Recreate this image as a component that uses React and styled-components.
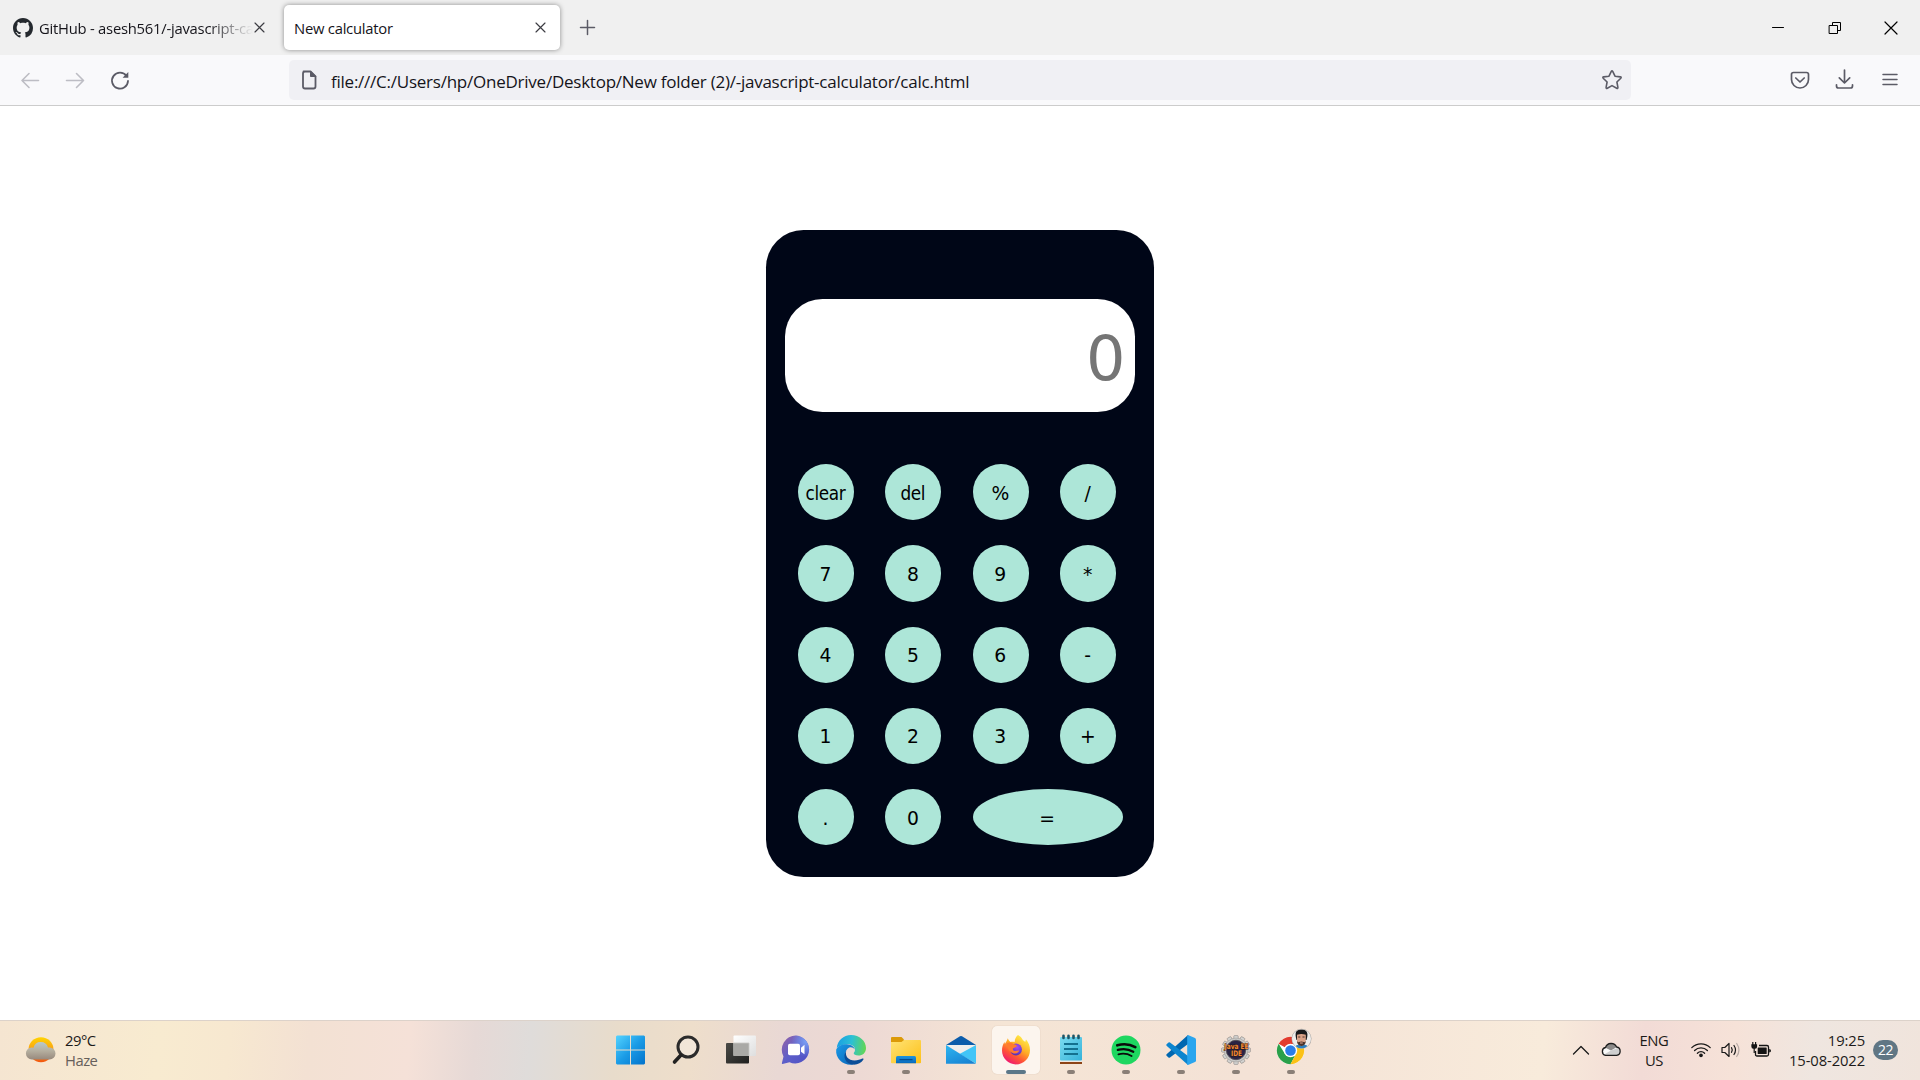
import React from "react";
import styled, { createGlobalStyle } from "styled-components";

const Global = createGlobalStyle`
  * { box-sizing: border-box; }
  body { margin: 0; background: #fff; overflow: hidden; }
`;

const Screen = styled.div`
  width: 1920px;
  height: 1080px;
  display: flex;
  flex-direction: column;
  background: #fff;
  font-family: "Open Sans", "Noto Sans", sans-serif;
  color: #15141a;
`;

/* ---------- browser chrome ---------- */

const TabStrip = styled.header`
  height: 55px;
  flex: none;
  display: flex;
  align-items: center;
  padding: 0 18px 0 5px;
  background: #f0f0f0;
`;

const Tab = styled.div`
  width: 276px;
  height: 45px;
  margin-right: ${(p) => (p.$active ? "0" : "3px")};
  padding: 0 ${(p) => (p.$active ? "15px" : "17px")} 0 ${(p) => (p.$active ? "10px" : "8px")};
  display: flex;
  align-items: center;
  border-radius: 5px;
  background: ${(p) => (p.$active ? "#fff" : "transparent")};
  box-shadow: ${(p) => (p.$active ? "0 0 5px rgba(0, 0, 0, 0.42)" : "none")};
`;

const TabTitle = styled.span`
  flex: 1;
  min-width: 0;
  margin-left: ${(p) => (p.$fade ? "6px" : "0")};
  margin-right: ${(p) => (p.$fade ? "2px" : "0")};
  white-space: nowrap;
  font-size: 14.8px;
  line-height: 24px;
  letter-spacing: -0.24px;
  mask-image: ${(p) => (p.$fade ? "linear-gradient(to left, transparent 0, #000 46px)" : "none")};
`;

const NewTab = styled.div`
  margin-left: 20px;
  display: flex;
`;

const WindowButtons = styled.div`
  margin-left: auto;
  display: flex;
  gap: 39px;
  align-items: center;
`;

const Icon = styled.svg`
  display: block;
  flex: none;
  overflow: visible;
  fill: none;
  stroke: ${(p) => p.$color || "#5b5b66"};
  stroke-width: ${(p) => p.$weight || 1.6};
  stroke-linecap: round;
  stroke-linejoin: round;
`;

const Toolbar = styled.nav`
  height: 51px;
  flex: none;
  display: flex;
  align-items: center;
  padding: 0 20px;
  background: #f9f9fb;
  border-bottom: 1px solid #ccc;
`;

const NavButtons = styled.div`
  width: 269px;
  display: flex;
  gap: 25px;
`;

const UrlField = styled.div`
  width: 1342px;
  height: 40px;
  display: flex;
  align-items: center;
  padding: 0 9px 0 11px;
  border-radius: 5px;
  background: #f0f0f4;
`;

const UrlText = styled.span`
  flex: 1;
  margin-left: 13px;
  padding-top: 3px;
  font-size: 17px;
  line-height: 24px;
  white-space: nowrap;
  letter-spacing: -0.24px;
`;

const ToolbarActions = styled.div`
  margin-left: auto;
  display: flex;
  gap: 25px;
`;

/* ---------- calculator ---------- */

const Page = styled.main`
  flex: 1;
  display: flex;
  justify-content: center;
  align-items: flex-start;
  padding-top: 124px;
`;

const Calculator = styled.section`
  width: 388px;
  height: 647px;
  padding: 69px 19px 0;
  border-radius: 37.5px;
  background: #000617;
  font-family: "DejaVu Sans", sans-serif;
`;

const Display = styled.div`
  height: 113px;
  display: flex;
  align-items: center;
  justify-content: flex-end;
  padding: 7px 10px 0 0;
  border-radius: 37.5px;
  background: #fff;
  color: #757575;
  font-size: 62px;
  letter-spacing: -0.5px;
  line-height: 1;
`;

const Keys = styled.div`
  margin: 52px 0 0 12.8px;
  display: grid;
  grid-template-columns: repeat(4, 56.25px);
  grid-auto-rows: 56.25px;
  column-gap: 31.2px;
  row-gap: 25px;
`;

const Key = styled.button`
  width: ${(p) => (p.$wide ? "150px" : "56.25px")};
  height: 56.25px;
  padding: 2px 1px 0 0;
  border: 0;
  border-radius: 50%;
  background: #ade6d8;
  color: #000;
  font-family: ${(p) => (p.$word ? '"DejaVu Sans Condensed", ' : "")}"DejaVu Sans", sans-serif;
  font-stretch: ${(p) => (p.$word ? "condensed" : "normal")};
  font-size: 18.75px;
  letter-spacing: ${(p) => (p.$word ? "-0.4px" : "0")};
`;

/* ---------- taskbar ---------- */

const Taskbar = styled.footer`
  height: 60px;
  flex: none;
  display: grid;
  grid-template-columns: 607px 708px 1fr;
  border-top: 1px solid #dcd2ca;
  background: linear-gradient(
    95deg,
    #f5e5d1 0, #f8ebd0 160px, #f7e8d0 230px, #f3e1d3 310px, #f5e1d8 410px,
    #e6d9d6 475px, #dfdcda 530px, #e8dccb 615px, #eedecb 690px, #e9d8d4 780px,
    #edd9d4 860px, #f5e5d5 1000px, #f4e2d6 1250px, #f8ebdb 1540px,
    #f2dbd6 1640px, #f6e2d8 1730px, #efe6e0 1810px, #f0e4dc 1920px
  );
`;

const Weather = styled.div`
  display: flex;
  align-items: center;
  gap: 9px;
  padding: 0 0 0 26px;
`;

const Lines = styled.div`
  display: flex;
  flex-direction: column;
  width: ${(p) => p.$width || "auto"};
  padding-bottom: 2px;
  text-align: ${(p) => p.$align || "left"};
  font-size: 14.8px;
  line-height: 20px;
  letter-spacing: ${(p) => p.$spacing || "-0.3px"};
  color: #1c1a19;
  white-space: nowrap;
`;

const Muted = styled.span`
  color: #66605b;
`;

const Apps = styled.div`
  display: flex;
  gap: 7px;
  padding-top: 5px;
`;

const App48 = styled.div`
  width: 48px;
  height: 48px;
  flex: none;
  display: flex;
  flex-direction: column;
  align-items: center;
  padding-top: 9px;
  border-radius: 5px;
  background: ${(p) => (p.$active ? "rgba(255, 252, 248, 0.7)" : "transparent")};
  box-shadow: ${(p) => (p.$active ? "0 0 1px rgba(120, 90, 70, 0.35)" : "none")};
`;

const Running = styled.i`
  width: ${(p) => (p.$active ? "20px" : "8px")};
  height: 4px;
  margin-top: 5px;
  border-radius: 2px;
  background: ${(p) => (p.$active ? "#5b7788" : "#8a7f77")};
`;

const Glyph = styled.svg`
  display: block;
  flex: none;
  overflow: visible;
`;

const Tray = styled.div`
  display: flex;
  align-items: center;
  justify-content: flex-end;
  padding-right: 22px;
`;

const Slot = styled.div`
  display: flex;
  justify-content: center;
  width: ${(p) => p.$width};
  margin-left: ${(p) => p.$before || "0"};
  margin-right: ${(p) => p.$after || "0"};
`;

const Badge = styled.div`
  width: 25px;
  height: 20px;
  margin: 0 0 1px 8px;
  border-radius: 10px;
  background: #607684;
  color: #fff;
  font-size: 14px;
  line-height: 20px;
  letter-spacing: -0.4px;
  text-align: center;
`;

/* ---------- drawings ---------- */

const Cross = ({ size = 9, color = "#3c3c42", weight = 1.3 }) => (
  <Icon width={size} height={size} viewBox="0 0 10 10" $color={color} $weight={weight}>
    <path d="M0 0L10 10M10 0L0 10" />
  </Icon>
);

const Github = () => (
  <Glyph width="20" height="20" viewBox="0 0 16 16">
    <path
      fill="#24292e"
      d="M8 0C3.58 0 0 3.58 0 8c0 3.54 2.29 6.53 5.47 7.59.4.07.55-.17.55-.38 0-.19-.01-.82-.01-1.49-2.01.37-2.53-.49-2.69-.94-.09-.23-.48-.94-.82-1.13-.28-.15-.68-.52-.01-.53.63-.01 1.08.58 1.23.82.72 1.21 1.87.87 2.33.66.07-.52.28-.87.51-1.07-1.78-.2-3.64-.89-3.64-3.95 0-.87.31-1.59.82-2.15-.08-.2-.36-1.02.08-2.12 0 0 .67-.21 2.2.82.64-.18 1.32-.27 2-.27s1.36.09 2 .27c1.53-1.04 2.2-.82 2.2-.82.44 1.1.16 1.92.08 2.12.51.56.82 1.27.82 2.15 0 3.07-1.87 3.75-3.65 3.95.29.25.54.73.54 1.48 0 1.07-.01 1.93-.01 2.2 0 .21.15.46.55.38A8.013 8.013 0 0 0 16 8c0-4.42-3.58-8-8-8z"
    />
  </Glyph>
);

const WindowsLogo = () => (
  <Glyph width="30" height="30" viewBox="0 0 30 30">
    <defs>
      <linearGradient id="win" x1="0" y1="0" x2="30" y2="30" gradientUnits="userSpaceOnUse">
        <stop stopColor="#55d4ff" />
        <stop offset=".5" stopColor="#1a9be6" />
        <stop offset="1" stopColor="#0070ca" />
      </linearGradient>
    </defs>
    <path fill="url(#win)" d="M1 .5h13v14H0v-13zM15 .5h13l1 1v13h-14zM0 15.500h14v14h-13l-1-1zM15 15.500h14v13l-1 1h-13z" />
  </Glyph>
);

const Search = () => (
  <Glyph width="30" height="30" viewBox="0 0 30 30">
    <circle cx="17" cy="12" r="10" fill="rgba(255,255,255,.25)" stroke="#2b2b2b" strokeWidth="3" />
    <path d="M10 20L3.500 27" stroke="#222" strokeWidth="3.600" strokeLinecap="round" />
  </Glyph>
);

const TaskView = () => (
  <Glyph width="30" height="30" viewBox="0 0 30 30">
    <defs>
      <linearGradient id="tvd" x2="1" y2="1">
        <stop stopColor="#4a4a47" />
        <stop offset="1" stopColor="#20201f" />
      </linearGradient>
      <linearGradient id="tvl" x2="1" y2="1">
        <stop stopColor="#fff" />
        <stop offset="1" stopColor="#dedede" />
      </linearGradient>
    </defs>
    <rect x="0" y="8" width="23" height="20.500" rx="1" fill="url(#tvd)" />
    <rect x="7.500" y="0.500" width="22.500" height="20.500" rx="1" fill="url(#tvl)" />
    <rect x="7.500" y="8" width="15.500" height="13" fill="#aaa9a6" />
    <path d="M7.500 8h15.500v13" stroke="#c9c8c5" fill="none" strokeWidth=".8" />
  </Glyph>
);

const Chat = () => (
  <Glyph width="30" height="30" viewBox="0 0 30 30">
    <defs>
      <linearGradient id="chat" x1="0" y1="0" x2="1" y2=".9">
        <stop offset=".1" stopColor="#8d62ac" />
        <stop offset=".5" stopColor="#5d5fc9" />
        <stop offset="1" stopColor="#4f50c4" />
      </linearGradient>
      <radialGradient id="chatr" cx=".9" cy=".2" r=".55">
        <stop stopColor="#7ba2f6" />
        <stop offset="1" stopColor="#7ba2f6" stopOpacity="0" />
      </radialGradient>
    </defs>
    <path fill="url(#chat)" d="M15 0.500A14 14 0 1 1 8.500 27.300L1.500 29Q.5 29 1 27.500L2.500 21.500A14.200 14.200 0 0 1 15 .5Z" />
    <path fill="url(#chatr)" d="M15 0.500A14 14 0 1 1 8.500 27.300L1.500 29Q.5 29 1 27.500L2.500 21.500A14.200 14.200 0 0 1 15 .5Z" />
    <rect x="7" y="8.800" width="12" height="11.500" rx="1.800" fill="#fff" />
    <path d="M20 12.800L23.500 9.800V19.300L20 16.800Z" fill="#fff" />
  </Glyph>
);

const Edge = () => (
  <Glyph width="30" height="30" viewBox="0 0 30 30">
    <defs>
      <linearGradient id="edt" x1="0" y1=".4" x2="1" y2=".5">
        <stop stopColor="#1a9fe3" />
        <stop offset=".5" stopColor="#2cc0d4" />
        <stop offset="1" stopColor="#62d654" />
      </linearGradient>
      <linearGradient id="edb" x2="1" y2="1">
        <stop stopColor="#1a9be8" />
        <stop offset="1" stopColor="#0b62b5" />
      </linearGradient>
    </defs>
    <path fill="url(#edt)" d="M.8 13C1.500 5.500 7.500 0 15 0c8.500 0 15 6 15 13 0 5-3.500 7.500-7.500 7.500-3.300 0-4.800-1.200-4.800-2.200 0-.8 1.300-1.200 1.300-3.500 0-3.300-3.200-5.600-7.200-5.600C7 9.200 3 10.500.8 13Z" />
    <path fill="url(#edb)" d="M.2 14.500C2 10.500 6.500 9 10.800 9.200c4.300.2 7.500 2.400 7.900 5.200C16 10.500 10.500 12 9.500 18c-.8 5 2.700 9.800 8 11.500C7.500 31 -.8 24 .2 14.500Z" />
    <path fill="#0b4d98" d="M10.200 16c-1.500 5 2.300 9.500 8.300 9.500 3.500 0 5.800-1 7.800-1.900 1-.4 1.500.3 1 1.100-2 3-5.800 5.300-10.500 4.900C9.500 28.800 6.200 21.500 10.200 16Z" />
  </Glyph>
);

const Folder = () => (
  <Glyph width="30" height="30" viewBox="0 0 30 30">
    <defs>
      <linearGradient id="fold" x2="1" y2="1">
        <stop stopColor="#ffe375" />
        <stop offset="1" stopColor="#fdc018" />
      </linearGradient>
      <linearGradient id="foldb" x2="0" y2="1">
        <stop stopColor="#1e93dc" />
        <stop offset="1" stopColor="#0869bd" />
      </linearGradient>
    </defs>
    <path fill="#dc9a08" d="M0 3q0-1 1-1h9.500L13 4.500V8H0Z" />
    <path fill="url(#fold)" d="M0 7h10.500L13 5h16q1 0 1 1v21.500q0 .8-1 .8H1q-1 0-1-.8Z" />
    <path fill="url(#foldb)" d="M5 28.300V22.500q0-1.500 1.500-1.500h17q1.500 0 1.500 1.500v5.800Z" />
    <path d="M9 24.700h12" stroke="#064c8f" strokeWidth="1.300" strokeLinecap="round" />
  </Glyph>
);

const Mail = () => (
  <Glyph width="30" height="30" viewBox="0 0 30 30">
    <defs>
      <linearGradient id="mail" x1=".2" x2=".8" y2="1">
        <stop stopColor="#2cb2ef" />
        <stop offset="1" stopColor="#1681d2" />
      </linearGradient>
    </defs>
    <path fill="#0b5cab" d="M0 10L14 1.300q1-.6 2 0L30 10Z" />
    <path fill="#f0eeec" d="M1 10h28L15 21Z" />
    <path fill="#42c5f7" d="M30 10v18.500L13.500 19Z" />
    <path fill="url(#mail)" d="M0 10l30 18.700H0Z" />
  </Glyph>
);

const Firefox = () => (
  <Glyph width="30" height="30" viewBox="0 0 30 30">
    <defs>
      <linearGradient id="ff" x1=".85" y1=".1" x2=".3" y2="1">
        <stop stopColor="#fff04a" />
        <stop offset=".4" stopColor="#ffac25" />
        <stop offset=".7" stopColor="#ff5436" />
        <stop offset="1" stopColor="#ef1673" />
      </linearGradient>
      <radialGradient id="ffg" cx=".6" cy=".3" r=".8">
        <stop stopColor="#a64bf0" />
        <stop offset=".6" stopColor="#6c3ad0" />
        <stop offset="1" stopColor="#4a2fa0" />
      </radialGradient>
    </defs>
    <path fill="url(#ff)" d="M17 0c2 .9 4 3 5 5.300.8.400 1.500.900 2.200 1.800L25 4.500C27.500 7 29 11 29 15.200 29 23 22.700 29.400 15 29.400S1 23.200 1 15.500c0-3.500 1-6.300 2.500-8.500l.4 2C4.800 7.500 6 6 6.800 3.300 7.500 5 8.300 6.200 9.500 7c1.300-.400 3-.300 4.200.1C13.500 4.500 15 1.700 17 0Z" />
    <circle cx="15" cy="14.500" r="5.900" fill="url(#ffg)" />
    <path fill="#ff7b2f" d="M5.800 8.300c1.800-1.300 4.500-1.200 6 .2 1.300 1.100 3.300 1 4.200 2.400-1 1.600-3.200 1.500-4 2.500-.6.900.1 2.400 1.700 2.600 2 .3 2.800-1 4.700-.4-1 2.300-3.500 3.600-6.300 2.700C8 17 6 12 5.800 8.300Z" />
  </Glyph>
);

const Notepad = () => (
  <Glyph width="30" height="30" viewBox="0 0 30 30">
    <defs>
      <linearGradient id="np" x2="1" y2="1">
        <stop stopColor="#7ddcf0" />
        <stop offset="1" stopColor="#35b2da" />
      </linearGradient>
    </defs>
    <path fill="#8d4315" d="M4 25h22v4H4Z" />
    <path fill="#efe9e3" d="M4 25h22v2H4Z" />
    <rect x="4" y="2" width="22" height="23.500" rx="1" fill="url(#np)" />
    <path d="M8 9h14M8 14h14M8 19h14" stroke="#14708f" strokeWidth="1.800" />
    <path d="M7.500.800v2.200M12.500.800v2.200M17.500.800v2.200M22.500.800v2.200" stroke="#1c5668" strokeWidth="2.600" strokeLinecap="round" />
  </Glyph>
);

const Spotify = () => (
  <Glyph width="30" height="30" viewBox="0 0 30 30">
    <circle cx="15" cy="15" r="14.500" fill="#1ed760" />
    <g fill="none" stroke="#0a0a0a" strokeLinecap="round">
      <path d="M6.300 10.300c6-1.700 12.800-1.100 18 1.900" strokeWidth="2.700" />
      <path d="M6.800 14.900c5.300-1.400 11-.8 15.500 1.900" strokeWidth="2.200" />
      <path d="M7.400 19.300c4.600-1.100 9.300-.6 13.200 1.700" strokeWidth="1.800" />
    </g>
  </Glyph>
);

const VsCode = () => (
  <Glyph width="30" height="30" viewBox="0 0 30 30">
    <path fill="#0067b0" d="M22 0v9L4 22.500q-.8.600-1.500 0L.6 20.800q-.8-.8 0-1.600Z" />
    <path fill="#0c85cf" d="M.6 9.200L2.500 7.500q.8-.6 1.500 0L22 21v9L.6 10.800q-.8-.8 0-1.600Z" />
    <path fill="#2aa5ee" d="M22 0l7 3q1 .5 1 1.500v21q0 1-1 1.500l-7 3q-.8-.5-.8-1.500V1.500Q21.200.5 22 0Z" />
  </Glyph>
);

const teeth = Array.from({ length: 12 }, (_, i) => i * 30);

const Eclipse = () => (
  <Glyph width="30" height="30" viewBox="0 0 30 30">
    <g fill="#d4d4d2" stroke="#8b8784" strokeWidth=".6">
      {teeth.map((a) => (
        <rect key={a} x="12.800" y=".6" width="4.400" height="5" rx=".8" transform={`rotate(${a} 15 15)`} />
      ))}
    </g>
    <circle cx="15" cy="15" r="12" fill="#c8c8c6" stroke="#9a9794" strokeWidth=".5" />
    <circle cx="15" cy="15" r="9.700" fill="#2a2343" stroke="#55505a" />
    <text x="15.500" y="14.300" textAnchor="middle" fontFamily="DejaVu Sans, sans-serif" fontWeight="bold" fontSize="7.500" textLength="24" lengthAdjust="spacingAndGlyphs" fill="#f58a32" stroke="#26150f" strokeWidth=".8" paintOrder="stroke">Java EE</text>
    <text x="15.500" y="20.800" textAnchor="middle" fontFamily="DejaVu Sans, sans-serif" fontWeight="bold" fontSize="7.500" textLength="11" lengthAdjust="spacingAndGlyphs" fill="#f58a32" stroke="#26150f" strokeWidth=".8" paintOrder="stroke">IDE</text>
  </Glyph>
);

const Chrome = () => (
  <Glyph width="30" height="30" viewBox="0 0 30 30">
    <circle cx="14.500" cy="15.500" r="13.700" fill="#fff" />
    <path fill="#e33b2e" d="M14.500 15.500L2.640 8.650A13.700 13.700 0 0 1 26.360 8.650L26.400 9H14.500Z" />
    <path fill="#2aa04a" d="M2.640 8.650A13.700 13.700 0 0 0 14.500 29.200L20.100 18.700 14.500 22 9 19Z" />
    <path fill="#fbc116" d="M26.360 8.650A13.700 13.700 0 0 1 14.500 29.200L20.100 18.700 20 9Z" />
    <circle cx="14.500" cy="15.500" r="6.700" fill="#fff" />
    <circle cx="14.500" cy="15.500" r="5.300" fill="#2b7de9" />
    <clipPath id="face"><circle cx="25.500" cy="3.700" r="9.500" /></clipPath>
    <circle cx="25.500" cy="3.700" r="10" fill="#aaa5a1" />
    <g clipPath="url(#face)">
      <rect x="15" y="-8" width="22" height="22" fill="#eeedeb" />
      <path fill="#2c7fbd" d="M18 15l2-4.500 3-1h5l3 1 3 4.500Z" />
      <path fill="#18191b" d="M20 3C18.500-3.500 21-5.500 25.500-5.500s7 2.500 5.500 8.500l-.5 2h-10Z" />
      <path fill="#d9a288" d="M21-.2q4.300-1.800 8.800 0v6q-.5 4.600-4.400 5.100-3.900-.5-4.400-5.100Z" />
      <path fill="#4a342c" d="M21 6q.8 1.600 2 1 2.400-1.200 4.800 0 1.200.6 2-1-.2 4.600-4.400 5.100-4.200-.5-4.400-5.100M22.200 1.600h2.100v.8h-2.100ZM26.500 1.600h2.100v.8h-2.100Z" />
      <path d="M24 8h2.800" stroke="#e0a692" strokeWidth="1.200" />
    </g>
  </Glyph>
);

const WeatherIcon = () => (
  <Glyph width="30" height="30" viewBox="0 0 30 30">
    <defs>
      <linearGradient id="sun" x2="0" y2="1">
        <stop stopColor="#ffd400" />
        <stop offset=".5" stopColor="#f9a018" />
        <stop offset="1" stopColor="#f2560f" />
      </linearGradient>
      <linearGradient id="haze" x2="0" y2="1">
        <stop stopColor="#b9c9cb" />
        <stop offset=".5" stopColor="#b5af9f" />
        <stop offset="1" stopColor="#97897d" />
      </linearGradient>
    </defs>
    <circle cx="15" cy="13.700" r="12.500" fill="url(#sun)" />
    <path fill="url(#haze)" d="M6 23.500A6 6 0 0 1 5.800 11.500 Q7 11.500 7.500 11.700A7.500 7.500 0 0 1 22 11.600 Q22.800 11.400 23.500 11.500A6 6 0 0 1 23.500 23.500Z" />
  </Glyph>
);

const Battery = () => (
  <Glyph width="20" height="16" viewBox="0 0 20 16">
    <g transform="translate(0 -1)">
      <path d="M8 3.500h8q1.500 0 1.500 1.500v7.500q0 1.500-1.500 1.500H6q-1.500 0-1.500-1.500V9" fill="none" stroke="#141414" strokeWidth="1.300" />
      <rect x="6.700" y="5.500" width="9" height="6.600" rx=".6" fill="#141414" />
      <path d="M18.200 7q1.800 0 1.800 1.800t-1.800 1.800Z" fill="#141414" />
      <path d="M.3 2.200h5.800v2.600q0 2-2 2h-1.700q-2 0-2-2Z" fill="#141414" />
      <path d="M1.800 0v3M4.600 0v3M3.200 6v5" stroke="#141414" strokeWidth="1.200" />
    </g>
  </Glyph>
);

/* ---------- data ---------- */

const keys = ["clear", "del", "%", "/", "7", "8", "9", "*", "4", "5", "6", "-", "1", "2", "3", "+", ".", "0", "="];

const apps = [
  { id: "start", Art: WindowsLogo },
  { id: "search", Art: Search },
  { id: "tasks", Art: TaskView },
  { id: "chat", Art: Chat },
  { id: "edge", Art: Edge, running: true },
  { id: "files", Art: Folder, running: true },
  { id: "mail", Art: Mail },
  { id: "firefox", Art: Firefox, running: true, active: true },
  { id: "notepad", Art: Notepad, running: true },
  { id: "spotify", Art: Spotify, running: true },
  { id: "code", Art: VsCode, running: true },
  { id: "eclipse", Art: Eclipse, running: true },
  { id: "chrome", Art: Chrome, running: true },
];

export default function App() {
  return (
    <Screen>
      <Global />
      <TabStrip>
        <Tab>
          <Github />
          <TabTitle $fade>GitHub - asesh561/-javascript-ca</TabTitle>
          <Cross />
        </Tab>
        <Tab $active>
          <TabTitle>New calculator</TabTitle>
          <Cross />
        </Tab>
        <NewTab>
          <Icon width="15" height="15" viewBox="0 0 15 15" $weight={1.5}>
            <path d="M7.500.500v14M.500 7.500h14" />
          </Icon>
        </NewTab>
        <WindowButtons>
          <Icon width="24" height="12" viewBox="0 0 24 12" $color="#000" $weight={1}>
            <path d="M6.500 5.500h11" />
          </Icon>
          <Icon width="12" height="12" viewBox="0 0 12 12" $color="#000" $weight={1}>
            <path d="M.5 3.500h8v8h-8zM3.500 3.500v-3h8v8h-3" />
          </Icon>
          <Slot $width="22px">
            <Cross size={12} color="#000" weight={1} />
          </Slot>
        </WindowButtons>
      </TabStrip>

      <Toolbar>
        <NavButtons>
          <Icon width="20" height="20" viewBox="0 0 20 20" $color="#bdbdc4">
            <path d="M18.500 10.500H2M9 3.500L2 10.500 9 17.500" />
          </Icon>
          <Icon width="20" height="20" viewBox="0 0 20 20" $color="#bdbdc4">
            <path d="M1.500 10.500h17M11.500 3.500l7 7-7 7" />
          </Icon>
          <Icon width="20" height="20" viewBox="0 0 20 20" $weight={1.8}>
            <path d="M16.500 6A8 8 0 1 0 18 11" />
            <path d="M18.300 2v5.700h-5.700z" fill="#5b5b66" stroke="none" />
          </Icon>
        </NavButtons>
        <UrlField>
          <Icon width="18" height="20" viewBox="0 0 18 20" $weight={1.8}>
            <path d="M3.500 1.500h7l5 5v10q0 2-2 2h-8.500q-2 0-2-2v-13q0-2 2-2" />
            <path d="M10.500 1.500v5h5z" fill="#5b5b66" strokeWidth="1" />
          </Icon>
          <UrlText>file:///C:/Users/hp/OneDrive/Desktop/New folder (2)/-javascript-calculator/calc.html</UrlText>
          <Icon width="20" height="20" viewBox="0 0 20 20" $weight={1.6}>
            <path d="M9.300 1.300q.7-1.200 1.400 0l2.300 4.900 5.300.7q1.400.3.500 1.300l-3.900 3.800 1 5.400q.1 1.400-1.200.8L10 15.600l-4.700 2.600q-1.300.6-1.200-.8l1-5.400L1.200 8.200q-.9-1 .5-1.300l5.300-.7z" />
          </Icon>
        </UrlField>
        <ToolbarActions>
          <Icon width="20" height="20" viewBox="0 0 20 20" $weight={1.7}>
            <path d="M3.500 2.500h13q2 0 2 2V9.500a8.500 8.500 0 0 1-17 0V4.500q0-2 2-2zM5.800 8l4.200 4 4.200-4" />
          </Icon>
          <Icon width="20" height="20" viewBox="0 0 20 20" $weight={1.7}>
            <path d="M9.500 0v12.800M4.300 7.800l5.200 5.200 5.200-5.200M1.500 14.800v1.200q0 2 2 2h12q2 0 2-2v-1.200" />
          </Icon>
          <Icon width="20" height="20" viewBox="0 0 20 20" $weight={1.5}>
            <path d="M3 4.500h14M3 9.500h14M3 14.500h14" />
          </Icon>
        </ToolbarActions>
      </Toolbar>

      <Page>
        <Calculator>
          <Display>0</Display>
          <Keys>
            {keys.map((k) => (
              <Key key={k} $wide={k === "="} $word={k.length > 1}>
                {k}
              </Key>
            ))}
          </Keys>
        </Calculator>
      </Page>

      <Taskbar>
        <Weather>
          <WeatherIcon />
          <Lines $spacing="-0.5px">
            <span>29°C</span>
            <Muted>Haze</Muted>
          </Lines>
        </Weather>
        <Apps>
          {apps.map(({ id, Art, running, active }) => (
            <App48 key={id} $active={active}>
              <Art />
              {running && <Running $active={active} />}
            </App48>
          ))}
        </Apps>
        <Tray>
          <Slot $width="16px" $after="12px">
            <Icon width="16" height="10" viewBox="0 0 16 10" $color="#1a1a1a" $weight={1.3}>
              <path d="M.500 8L8 .5 15.500 8" />
            </Icon>
          </Slot>
          <Slot $width="20px" $after="14px">
            <Glyph width="20" height="18" viewBox="0 0 20 18">
              <path d="M4.500 13.300a4 4 0 0 1 0-7.800A6 6 0 0 1 15.600 5 4.200 4.200 0 0 1 15.600 13.300Z" fill="#fafafa" />
              <path d="M4.500 5.800A6 6 0 0 1 15.400 5.200L10 8.500Z" fill="#8c8a89" />
              <path d="M3 12.500l7-4 6-2.300q3 .5 3 3.500-.5 3.500-3.400 3.500H4.500Z" fill="#cfcfcf" />
              <path d="M4.500 13.300a4 4 0 0 1 0-7.800A6 6 0 0 1 15.600 5 4.200 4.200 0 0 1 15.600 13.300Z" fill="none" stroke="#1d1d1d" strokeWidth="1.300" />
            </Glyph>
          </Slot>
          <Lines $width="38px" $align="center" $spacing="-0.4px">
            <span>ENG</span>
            <span>US</span>
          </Lines>
          <Slot $width="20px" $before="18px" $after="10px">
            <Icon width="20" height="17" viewBox="0 0 20 17" $color="#1a1a1a" $weight={1.3}>
              <path d="M.8 5.600a13 13 0 0 1 18.400 0M3.600 8.500a9 9 0 0 1 12.800 0M6.400 11.200a5 5 0 0 1 7.200 0" />
              <circle cx="10" cy="13.300" r="1.200" fill="#1a1a1a" />
            </Icon>
          </Slot>
          <Slot $width="20px" $after="10px">
            <Icon width="20" height="18" viewBox="0 0 20 18" $color="#1a1a1a" $weight={1.2}>
              <path d="M1 5.500h2.800L8 1.500v13L3.800 10.500H1z" />
              <path d="M10.500 5.700q1.500 2.300 0 4.600M13 3.500q3 4.500 0 9" />
              <path d="M15.700 1.500q4.500 6.500 0 13" stroke="#b8aaa5" />
            </Icon>
          </Slot>
          <Slot $width="20px">
            <Battery />
          </Slot>
          <Lines $width="94px" $align="right" $spacing="-0.12px">
            <span>19:25</span>
            <span>15-08-2022</span>
          </Lines>
          <Badge>22</Badge>
        </Tray>
      </Taskbar>
    </Screen>
  );
}
